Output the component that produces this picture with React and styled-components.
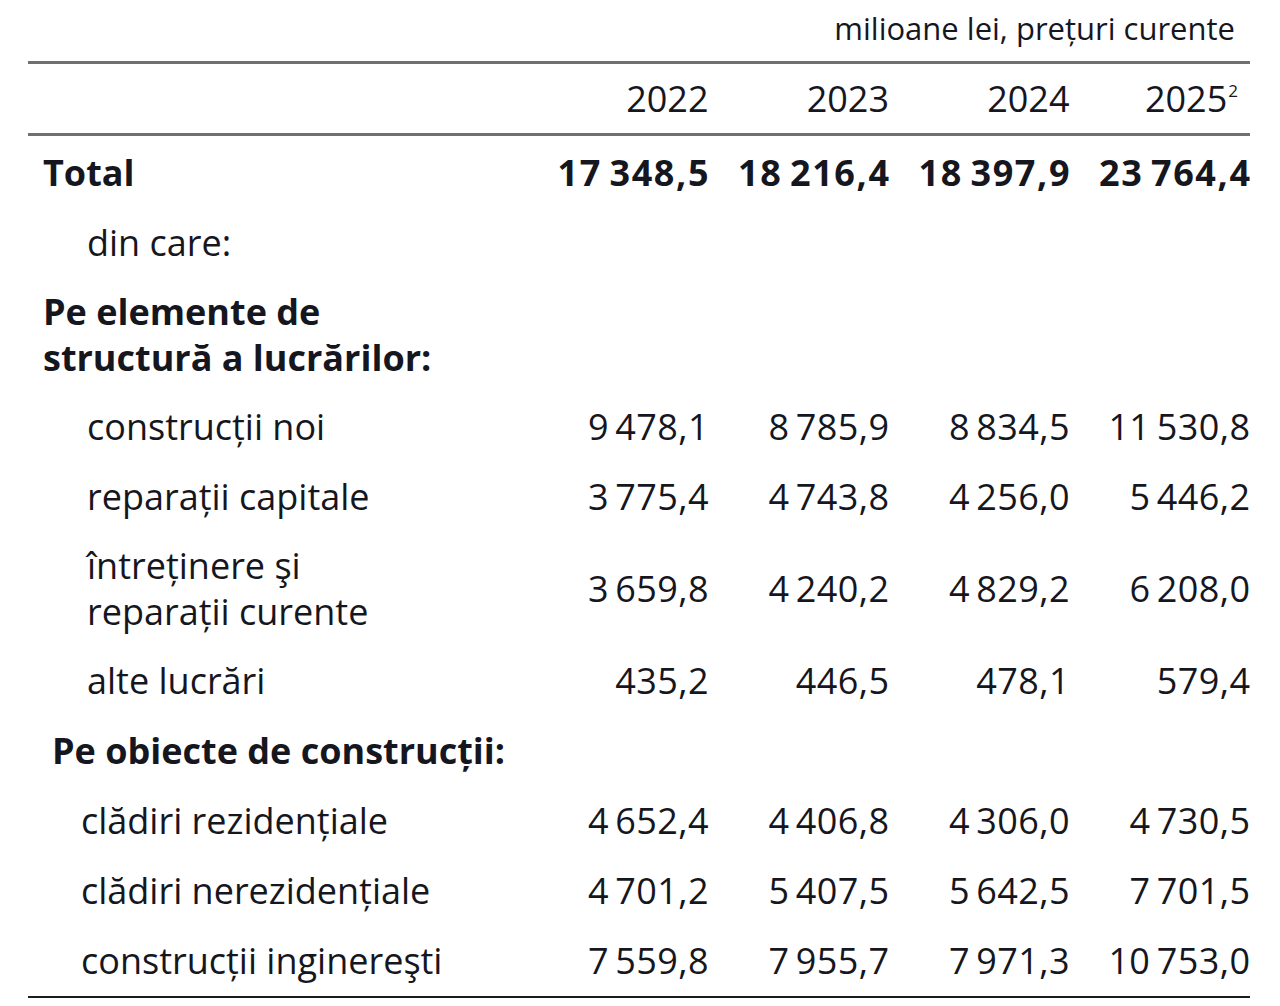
import styled, { createGlobalStyle } from 'styled-components';

const GlobalStyle = createGlobalStyle`
  html, body {
    margin: 0;
    padding: 0;
    background: #ffffff;
  }
  body {
    font-family: "Open Sans", "Noto Sans", "DejaVu Sans", sans-serif;
    color: #16161e;
  }
`;

const T = '\u2009';

const rows = [
  { label: 'Total', values: [`17${T}348,5`, `18${T}216,4`, `18${T}397,9`, `23${T}764,4`], bold: true, indent: 15 },
  { label: 'din care:', indent: 59 },
  { label: ['Pe elemente de', 'structură a lucrărilor:'], bold: true, indent: 15 },
  { label: 'construcții noi', values: [`9${T}478,1`, `8${T}785,9`, `8${T}834,5`, `11${T}530,8`], indent: 59 },
  { label: 'reparații capitale', values: [`3${T}775,4`, `4${T}743,8`, `4${T}256,0`, `5${T}446,2`], indent: 59 },
  { label: ['întreținere şi', 'reparații curente'], values: [`3${T}659,8`, `4${T}240,2`, `4${T}829,2`, `6${T}208,0`], indent: 59 },
  { label: 'alte lucrări', values: ['435,2', '446,5', '478,1', '579,4'], indent: 59 },
  { label: 'Pe obiecte de construcții:', bold: true, indent: 24 },
  { label: 'clădiri rezidențiale', values: [`4${T}652,4`, `4${T}406,8`, `4${T}306,0`, `4${T}730,5`], indent: 53 },
  { label: 'clădiri nerezidențiale', values: [`4${T}701,2`, `5${T}407,5`, `5${T}642,5`, `7${T}701,5`], indent: 53 },
  { label: 'construcții inginereşti', values: [`7${T}559,8`, `7${T}955,7`, `7${T}971,3`, `10${T}753,0`], indent: 53 },
];

const Page = styled.div`
  width: 1222px;
  margin-left: 28px;
  padding-top: 8px;
`;

const Caption = styled.div`
  font-size: 31px;
  line-height: 40px;
  text-align: right;
  padding-right: 15px;
  margin-bottom: 13px;
`;

const Table = styled.div`
  border-top: 3px solid #707070;
  border-bottom: 2px solid #1c1c1c;
`;

const Row = styled.div`
  display: grid;
  grid-template-columns: 1fr repeat(4, 180.5px);
  align-items: center;
  padding: ${p => (p.$multi ? '11px 0' : '12px 0')};
  font-size: 36px;
  line-height: 46px;
  font-weight: ${p => (p.$bold ? 700 : 400)};
`;

const HeaderRow = styled(Row)`
  padding: 12px 0 11px;
  border-bottom: 3px solid #707070;
  margin-bottom: 2px;
`;

const Label = styled.div`
  padding-left: ${p => p.$indent}px;
  white-space: nowrap;
`;

const Num = styled.div`
  text-align: right;
  white-space: nowrap;
  letter-spacing: ${p => (p.$bold ? '1.6px' : '0.4px')};
  margin-right: ${p => (p.$bold ? '-1.6px' : '-0.4px')};
  padding-right: ${p => p.$pad || 0}px;
`;

const Year = styled(Num)`
  letter-spacing: 0;
  margin-right: 0;
`;

const Sup = styled.sup`
  font-size: 17px;
  line-height: 0;
  vertical-align: 15px;
  margin-left: 1px;
`;

export default function App() {
  return (
    <>
      <GlobalStyle />
      <Page>
        <Caption>milioane lei, prețuri curente</Caption>
        <Table>
          <HeaderRow>
            <Label />
            <Year>2022</Year>
            <Year>2023</Year>
            <Year>2024</Year>
            <Year $pad={12}>
              2025<Sup>2</Sup>
            </Year>
          </HeaderRow>
          {rows.map((r, i) => {
            const multi = Array.isArray(r.label);
            return (
              <Row key={i} $bold={r.bold} $multi={multi}>
                <Label $indent={r.indent}>
                  {multi ? r.label.map((l, j) => <div key={j}>{l}</div>) : r.label}
                </Label>
                {(r.values || ['', '', '', '']).map((v, j) => (
                  <Num key={j} $bold={r.bold}>{v}</Num>
                ))}
              </Row>
            );
          })}
        </Table>
      </Page>
    </>
  );
}
